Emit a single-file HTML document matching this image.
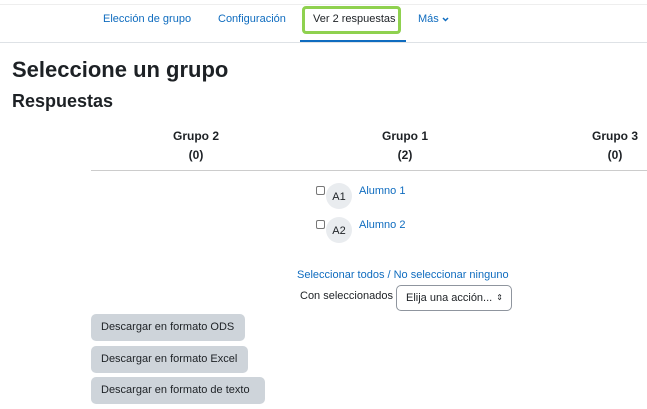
<!DOCTYPE html>
<html><head><style>
*{margin:0;padding:0;box-sizing:border-box}
body{width:647px;height:409px;overflow:hidden;background:#fff;font-family:"Liberation Sans",sans-serif;color:#1d2125;position:relative;font-size:11px}
.a{position:absolute;white-space:nowrap}
.l{color:#0f6cbf}
.c{text-align:center;font-weight:bold;font-size:12px;line-height:19px;transform:translateX(-50%)}
.btn{position:absolute;left:91px;height:27px;background:#ced4da;border-radius:5px;font-size:11px;line-height:27px;padding-left:10px;color:#1d2125}
</style></head><body>
<div class="a" style="left:0;top:4px;width:647px;height:1px;background:#eee"></div>
<div class="a" style="left:0;top:42px;width:647px;height:1px;background:#dee2e6"></div>
<div class="a l" style="left:103px;top:13px">Elección de grupo</div>
<div class="a l" style="left:218px;top:13px">Configuración</div>
<div class="a" style="left:302px;top:6px;width:99px;height:28px;border:3px solid #8fd14f;border-radius:4px"></div>
<div class="a" style="left:313px;top:13px">Ver 2 respuestas</div>
<div class="a" style="left:300px;top:40px;width:106px;height:2px;background:#0f6cbf"></div>
<div class="a l" style="left:418px;top:13px">Más</div>
<svg class="a" style="left:442px;top:17px" width="7" height="5" viewBox="0 0 7 5"><path d="M1 1L3.5 3.5L6 1" fill="none" stroke="#0f6cbf" stroke-width="1.5"/></svg>
<div class="a" style="left:12px;top:57px;font-size:22px;font-weight:bold">Seleccione un grupo</div>
<div class="a" style="left:12px;top:91px;font-size:18px;font-weight:bold">Respuestas</div>
<div class="a c" style="left:196px;top:127px">Grupo 2<br>(0)</div>
<div class="a c" style="left:405px;top:127px">Grupo 1<br>(2)</div>
<div class="a c" style="left:615px;top:127px">Grupo 3<br>(0)</div>
<div class="a" style="left:91px;top:170px;width:556px;height:1px;background:#ccc"></div>
<div class="a" style="left:316px;top:186px;width:9px;height:9px;border:1px solid #777;border-radius:2px"></div>
<div class="a" style="left:326px;top:183px;width:26px;height:26px;border-radius:50%;background:#e9ecef;font-size:11px;line-height:28px;text-align:center">A1</div>
<div class="a l" style="left:359px;top:185px">Alumno 1</div>
<div class="a" style="left:316px;top:220px;width:9px;height:9px;border:1px solid #777;border-radius:2px"></div>
<div class="a" style="left:326px;top:217px;width:26px;height:26px;border-radius:50%;background:#e9ecef;font-size:11px;line-height:28px;text-align:center">A2</div>
<div class="a l" style="left:359px;top:219px">Alumno 2</div>
<div class="a l" style="left:297px;top:269px">Seleccionar todos / No seleccionar ninguno</div>
<div class="a" style="left:300px;top:290px">Con seleccionados</div>
<div class="a" style="left:396px;top:285px;width:116px;height:26px;border:1px solid #8f959e;border-radius:5px;line-height:24px;padding-left:9px;font-size:11px">Elija una acción... <span style="position:absolute;right:8px;font-size:8px">&#8661;</span></div>
<div class="btn" style="top:314px;width:154px">Descargar en formato ODS</div>
<div class="btn" style="top:346px;width:157px">Descargar en formato Excel</div>
<div class="btn" style="top:377px;width:174px">Descargar en formato de texto</div>
</body></html>
